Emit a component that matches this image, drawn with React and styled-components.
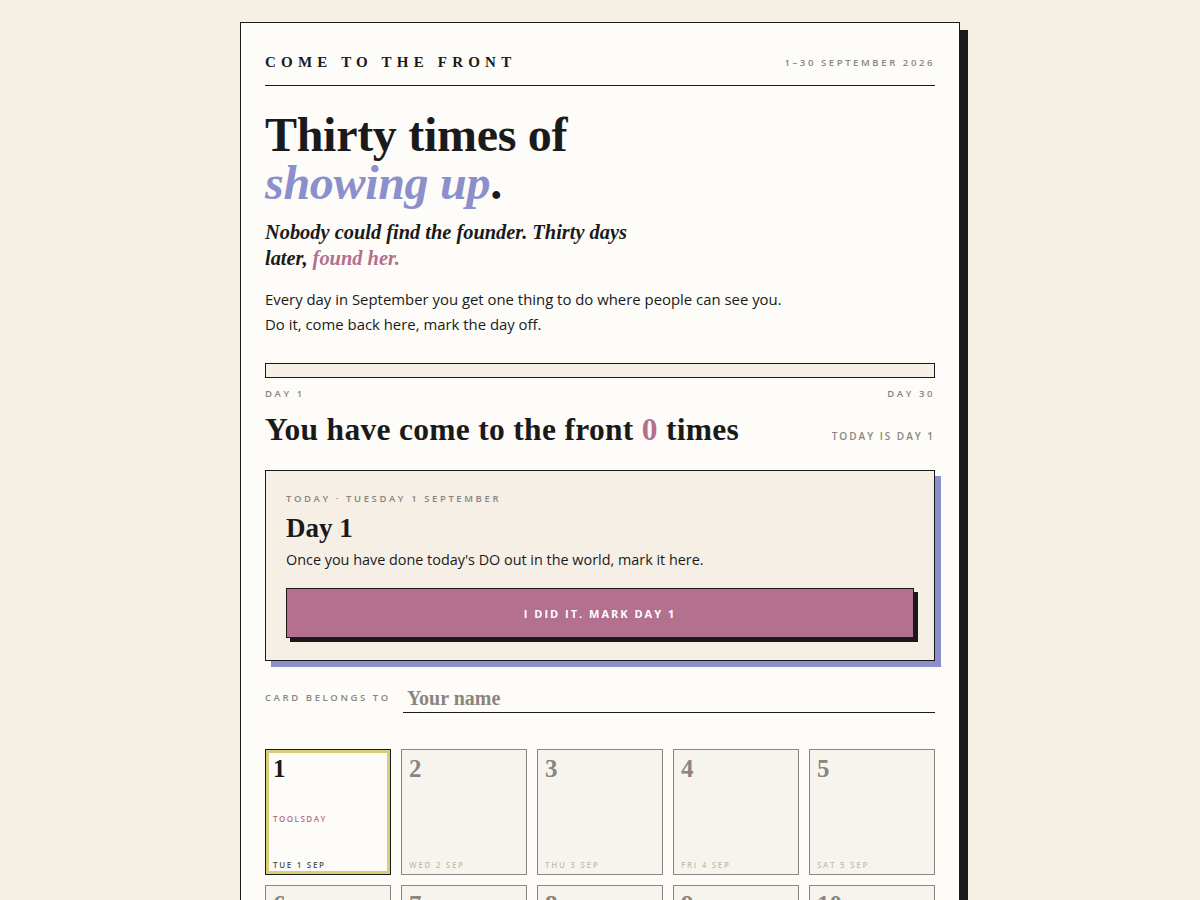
import React, { useState } from 'react'
import styled, { createGlobalStyle } from 'styled-components'

const ink = '#1a1a1a'
const paper = '#fdfcf8'
const cream = '#f5efe6'
const grey = '#8a857e'
const mauve = '#b3708f'
const lilac = '#8b8fcc'

const serif = `"Liberation Serif", "DejaVu Serif", serif`
const sans = `"Open Sans", "Noto Sans", sans-serif`

const GlobalStyle = createGlobalStyle`
  *, *::before, *::after {
    box-sizing: border-box;
  }
  body {
    margin: 0;
    background: #f5efe4;
    font-family: ${sans};
    color: ${ink};
  }
`

const Page = styled.div`
  display: flex;
  justify-content: center;
  padding-top: 22px;
  padding-bottom: 40px;
`

const Paper = styled.main`
  width: 720px;
  background: ${paper};
  border: 1px solid ${ink};
  box-shadow: 8px 8px 0 ${ink};
  padding: 31px 24px 40px;
`

const Masthead = styled.header`
  display: flex;
  justify-content: space-between;
  align-items: center;
  padding-bottom: 14px;
  border-bottom: 1px solid ${ink};
`

const Brand = styled.div`
  font-family: ${serif};
  font-weight: 700;
  font-size: 15px;
  letter-spacing: 5.2px;
`

const Label = styled.div`
  font-family: ${sans};
  font-size: ${p => p.$size || 10}px;
  font-weight: 600;
  letter-spacing: ${p => p.$spacing || 2}px;
  text-transform: uppercase;
  color: ${p => p.$color || grey};
  white-space: nowrap;
`

const Title = styled.h1`
  margin: 25px 0 0;
  font-family: ${serif};
  font-weight: 700;
  font-size: 48px;
  line-height: 48px;
  letter-spacing: -0.3px;
`

const Accent = styled.em`
  color: ${p => p.$color};
  font-style: italic;
`

const Lede = styled.p`
  margin: 12px 0 0;
  max-width: 380px;
  font-family: ${serif};
  font-style: italic;
  font-weight: 700;
  font-size: 20.4px;
  line-height: 26px;
`

const Body = styled.p`
  margin: ${p => p.$margin || '16px 0 0'};
  font-size: ${p => p.$size || 14.9}px;
  line-height: 25px;
`

const Track = styled.div`
  margin-top: 26px;
  height: 15px;
  border: 1px solid ${ink};
  background: ${cream};
`

const Fill = styled.div`
  height: 100%;
  background: ${mauve};
`

const Ends = styled.div`
  display: flex;
  justify-content: space-between;
  margin-top: 9px;
`

const CountRow = styled.div`
  display: flex;
  justify-content: space-between;
  align-items: baseline;
  margin-top: 12px;
`

const Count = styled.h2`
  margin: 0;
  font-family: ${serif};
  font-weight: 700;
  font-size: 31.5px;
  line-height: 36px;
  letter-spacing: 0.3px;
`

const Zero = styled.span`
  color: ${mauve};
`

const TodayCard = styled.section`
  margin-top: 22px;
  padding: 21px 20px 22px;
  background: ${cream};
  border: 1px solid ${ink};
  box-shadow: 6px 6px 0 ${lilac};
`

const DayTitle = styled.h3`
  margin: 7px 0 0;
  font-family: ${serif};
  font-weight: 700;
  font-size: 27px;
  line-height: 32px;
`

const MarkButton = styled.button`
  display: block;
  width: 100%;
  margin-top: 16px;
  height: 50px;
  background: ${mauve};
  color: #fff;
  border: 1px solid ${ink};
  box-shadow: 4px 4px 0 ${ink};
  font-family: ${sans};
  font-weight: 700;
  font-size: 11px;
  letter-spacing: 2px;
  text-transform: uppercase;
  cursor: pointer;
`

const NameRow = styled.div`
  display: flex;
  align-items: center;
  gap: 12px;
  margin-top: 21px;
`

const NameInput = styled.input`
  flex: 1;
  border: none;
  border-bottom: 1px solid ${ink};
  background: transparent;
  padding: 5px 0 2px 4px;
  font-family: ${serif};
  font-size: 20px;
  font-weight: 700;
  color: ${ink};
  outline: none;
  &::placeholder {
    color: ${grey};
  }
`

const Grid = styled.div`
  display: grid;
  grid-template-columns: repeat(5, 1fr);
  gap: 10px;
  margin-top: 36px;
`

const Cell = styled.div`
  aspect-ratio: 1;
  display: flex;
  flex-direction: column;
  padding: 5px 7px 4px;
  background: ${p => (p.$today ? paper : '#f7f4ee')};
  border: 1px solid ${p => (p.$today ? ink : grey)};
  box-shadow: ${p => (p.$today ? 'inset 0 0 0 3px #d9cd7c' : 'none')};
`

const CellNum = styled.div`
  font-family: ${serif};
  font-weight: 700;
  font-size: 25px;
  line-height: 28px;
  color: ${p => (p.$today ? ink : grey)};
`

const CellTag = styled.div`
  margin-top: auto;
  margin-bottom: 35px;
  font-size: 8px;
  font-weight: 600;
  letter-spacing: 1.5px;
  color: ${mauve};
`

const CellDate = styled.div`
  margin-top: ${p => (p.$pushed ? '0' : 'auto')};
  font-size: 8px;
  font-weight: 600;
  letter-spacing: 1.7px;
  color: ${p => (p.$today ? '#55524d' : '#c4beb5')};
`

const weekdays = ['SUN', 'MON', 'TUE', 'WED', 'THU', 'FRI', 'SAT']
const days = Array.from({ length: 30 }, (_, i) => {
  const d = i + 1
  const wd = weekdays[(d + 1) % 7]
  return { d, label: `${wd} ${d} SEP`, tools: wd === 'TUE' }
})

const App = () => {
  const [done] = useState(0)
  const today = 1

  return (
    <>
      <GlobalStyle />
      <Page>
        <Paper>
          <Masthead>
            <Brand>COME TO THE FRONT</Brand>
            <Label $size={9.5} $spacing={2.6}>1–30 September 2026</Label>
          </Masthead>

          <Title>
            Thirty times of
            <br />
            <Accent $color={lilac}>showing up</Accent>.
          </Title>

          <Lede>
            Nobody could find the founder. Thirty days later,{' '}
            <Accent $color={mauve}>found her.</Accent>
          </Lede>

          <Body>
            Every day in September you get one thing to do where people can see you.
            <br />
            Do it, come back here, mark the day off.
          </Body>

          <Track>
            <Fill style={{ width: `${(done / 30) * 100}%` }} />
          </Track>
          <Ends>
            <Label $size={9.5} $spacing={2.6}>Day 1</Label>
            <Label $size={9.5} $spacing={2.6}>Day 30</Label>
          </Ends>

          <CountRow>
            <Count>
              You have come to the front <Zero>{done}</Zero> times
            </Count>
            <Label>Today is day {today}</Label>
          </CountRow>

          <TodayCard>
            <Label $size={9.5} $spacing={2.6}>Today · Tuesday 1 September</Label>
            <DayTitle>Day {today}</DayTitle>
            <Body $margin="3px 0 0" $size={14.4}>
              Once you have done today's DO out in the world, mark it here.
            </Body>
            <MarkButton>I did it. Mark day {today}</MarkButton>
          </TodayCard>

          <NameRow>
            <Label $size={9.5} $spacing={2.6}>Card belongs to</Label>
            <NameInput placeholder="Your name" />
          </NameRow>

          <Grid>
            {days.map(day => {
              const isToday = day.d === today
              return (
                <Cell key={day.d} $today={isToday}>
                  <CellNum $today={isToday}>{day.d}</CellNum>
                  {isToday && day.tools && <CellTag>TOOLSDAY</CellTag>}
                  <CellDate $today={isToday} $pushed={isToday && day.tools}>
                    {day.label}
                  </CellDate>
                </Cell>
              )
            })}
          </Grid>
        </Paper>
      </Page>
    </>
  )
}

export default App
